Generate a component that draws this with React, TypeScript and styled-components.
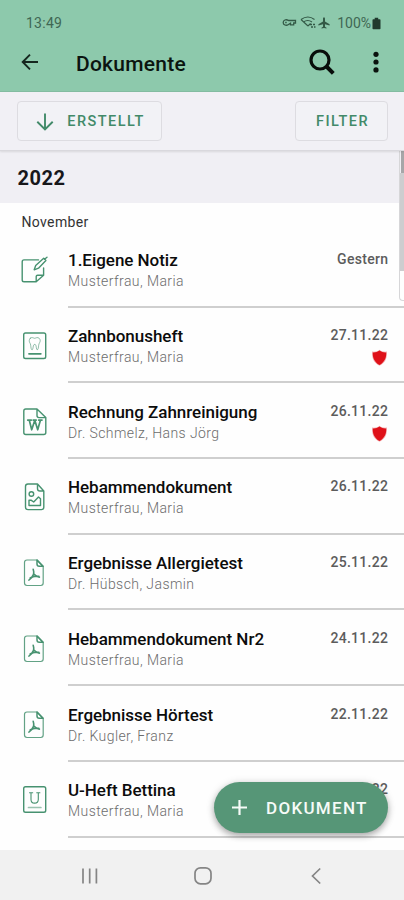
import React from "react";
import styled, { createGlobalStyle } from "styled-components";

const GlobalStyle = createGlobalStyle`
  * { box-sizing: border-box; }
  body { margin: 0; background: #fff; font-family: Roboto, "Liberation Sans", sans-serif; }
`;

const Screen = styled.div`
  position: relative;
  display: flex;
  flex-direction: column;
  width: 404px;
  height: 900px;
  overflow: hidden;
  background: #fefefe;
`;

const Header = styled.header`
  flex: none;
  height: 92px;
  background: #8dc9ac;
  border-bottom: 1px solid #84bda2;
`;

const StatusBar = styled.div`
  display: flex;
  align-items: center;
  justify-content: space-between;
  height: 32px;
  padding: 14px 23px 0 26px;
  color: #3f6753;
  font-size: 14px;
  line-height: 18px;
`;

const StatusTime = styled.span`
  letter-spacing: 0.25px;
`;

const StatusIcons = styled.div`
  display: flex;
  align-items: center;
  svg { display: block; }
`;

const Battery = styled.span`
  margin: 0 1px 0 4px;
  letter-spacing: 0;
`;

const AppBar = styled.div`
  display: flex;
  align-items: center;
  height: 60px;
  padding: 0 20px 0 20px;
  color: #0b1410;
  svg { display: block; }
`;

const AppTitle = styled.h1`
  flex: 1;
  margin: 3px 0 0 36px;
  font-size: 21px;
  line-height: 28px;
  font-weight: 500;
  letter-spacing: 0.25px;
`;

const AppActions = styled.div`
  display: flex;
  align-items: center;
  gap: 32px;
`;

const Toolbar = styled.div`
  position: relative;
  z-index: 1;
  flex: none;
  display: flex;
  justify-content: space-between;
  height: 59px;
  padding: 9px 16px 0 17px;
  background: #f1f0f5;
  border-bottom: 1px solid #d9d8dd;
  box-shadow: 0 1px 2px rgba(0, 0, 0, 0.1);
`;

const OutlineButton = styled.button<{ $width: number }>`
  display: flex;
  align-items: center;
  justify-content: center;
  gap: 13px;
  width: ${(p) => p.$width}px;
  height: 40px;
  padding: 1px 0 0 2px;
  border: 1px solid #dddce1;
  border-radius: 4px;
  background: #f2f2f6;
  color: #428a69;
  font: 500 14.5px/20px Roboto, sans-serif;
  letter-spacing: 1.45px;
`;

const YearHeading = styled.h2`
  flex: none;
  height: 52px;
  margin: 0;
  padding: 13px 17.5px 0;
  background: #f0eff4;
  color: #17171a;
  font-size: 20px;
  line-height: 28px;
  font-weight: 700;
  letter-spacing: 0.5px;
`;

const MonthHeading = styled.h3`
  flex: none;
  height: 29px;
  margin: 0;
  padding: 10px 21.5px 0;
  color: #333;
  font-size: 14px;
  line-height: 19px;
  font-weight: 400;
  letter-spacing: 0.35px;
`;

const List = styled.ul`
  flex: 1;
  min-height: 0;
  margin: 0;
  padding: 0;
  overflow: hidden;
  list-style: none;
`;

const Row = styled.li`
  display: flex;
  height: 75.7px;
`;

const RowIcon = styled.div`
  flex: none;
  width: 68px;
  padding: 23.4px 0 0 20px;
  svg { display: block; }
`;

const RowBody = styled.div`
  flex: 1;
  display: flex;
  justify-content: space-between;
  padding: 17.4px 16px 0 0;
  border-bottom: 2px solid #cfcfcf;
`;

const RowTitle = styled.div`
  color: #0c0c0c;
  font-size: 17px;
  line-height: 22px;
  font-weight: 500;
  letter-spacing: -0.03px;
`;

const RowOwner = styled.div`
  color: #6c6c6c;
  font-size: 14px;
  line-height: 21px;
  font-weight: 300;
  letter-spacing: 0.42px;
`;

const RowMeta = styled.div`
  display: flex;
  flex-direction: column;
  align-items: flex-end;
  gap: 4px;
  margin-right: -0.3px;
  color: #5c5c5c;
  font-size: 14px;
  line-height: 20px;
  font-weight: 500;
  letter-spacing: 0.3px;
  svg { display: block; }
`;

const FloatingButton = styled.button`
  position: absolute;
  left: 214px;
  top: 782px;
  display: flex;
  align-items: center;
  gap: 18px;
  width: 174px;
  height: 51px;
  padding: 0 0 0 17px;
  border: 0;
  border-radius: 26px;
  background: #569677;
  color: #f6fbf8;
  font: 500 17px/22px Roboto, sans-serif;
  letter-spacing: 1.3px;
  box-shadow: 0 3px 6px rgba(0, 0, 0, 0.28), 0 1px 10px rgba(0, 0, 0, 0.12);
`;

const ScrollRail = styled.div`
  position: absolute;
  right: 0;
  top: 151px;
  width: 5px;
  height: 150px;
  padding: 22px 0 0 0;
  border-left: 1px solid #d6d6d8;
  border-bottom: 1px solid #d6d6d8;
  border-bottom-left-radius: 4px;
  background: linear-gradient(to right, transparent 1px, #a6a6a8 1px) 0 0 / 100% 22px no-repeat;
`;

const ScrollThumb = styled.div`
  height: 98px;
  background: #cdcdcf;
`;

const NavBar = styled.nav`
  flex: none;
  display: flex;
  align-items: center;
  height: 50px;
  padding: 1px 80px 0;
  justify-content: space-between;
  background: #f1f1f1;
  svg { display: block; }
`;

type Kind = "note" | "tooth" | "word" | "image" | "pdf" | "uheft";

const Glyphs: Record<Kind, React.ReactNode> = {
  note: (
    <>
      <path d="M18.5 4.9H4q-1.8 0-1.8 1.8V25q0 1.8 1.8 1.8h12.2l7.4-6.5V13M16.2 26.6v-5q0-1.4 1.4-1.4h5.8" />
      <path d="m14.2 14.8 1.5-4.2 8-7.4 2.2 2.2-7.4 7.8ZM24.5 4.3l2.5-2" />
    </>
  ),
  tooth: (
    <>
      <rect x="3.7" y="2" width="22" height="25.5" rx="1.8" />
      <path d="M10.3 7.2c1.8-1.5 3-.1 4.3.1 1.4-.2 3-1.5 4.6 0 2 2.1.5 4.2-.2 5.6-.6 1.5-.3 4.6-1.4 5.7-1 .7-1-1-1.3-2.2-.3-2-.6-3-1.600-3s-1.300 1-1.600 3c-.3 1.200-.4 2.900-1.400 2.200-1-1.100-.8-4.200-1.300-5.700-.8-1.400-2.200-3.600-.1-5.700Z" strokeWidth=".8" opacity=".75" />
      <path d="M9 22.800h11.800" strokeWidth="1.800" />
    </>
  ),
  word: (
    <>
      <path d="M17 2H5.800Q3.800 2 3.800 4v21.500q0 2 2 2h18q2 0 2-2V10.600ZM17 2v6.600q0 2 2 2h6.800" />
      <path d="M7.700 13.100h3.600M13.200 13.100h3M18.700 13.100h3.300M9.300 13.300l2.400 9.500 3.100-9.500 2.900 9.500 2.700-9.500" strokeWidth="1.700" />
    </>
  ),
  image: (
    <>
      <path d="M17.500 2H8Q5.500 2 5.500 4.500v20.700q0 2.400 2.500 2.400h13.400q2.400 0 2.400-2.400V9ZM17.500 2v4.400Q17.500 9 20 9h3.800" />
      <circle cx="11.400" cy="12" r="2.300" />
      <path d="M9 18.200v5.300h11.500v-6.800l-2-1.800-4.800 5.100-2.700-1.800Z" strokeWidth="1.400" />
    </>
  ),
  pdf: (
    <>
      <path d="M17 2H7Q4.500 2 4.500 4.500v20.600q0 2.400 2.500 2.400h13.800q2.400 0 2.400-2.400V8.500Z" strokeWidth="1.200" opacity=".85" />
      <path d="M17 2v4q0 2.300 2.300 2.300h3.800Z" strokeWidth="1.500" />
      <path d="M13.200 11.200c.7 2.200.7 4 .3 5.200-.9 2.300-2.300 4.400-4.600 5.700M13.600 15.800c1.400 1.600 3 3 5.800 3.300M10.200 20c2.600-1.700 5.400-2.200 8.600-1.600" strokeWidth="1.600" />
    </>
  ),
  uheft: (
    <>
      <rect x="3.700" y="1.800" width="22" height="25.500" rx="1.800" />
      <path d="M9.500 7.800h3.200M16.700 7.800h3.200M11 8v6.400q0 3.700 3.600 3.700t3.700-3.700V8" strokeWidth="1.100" />
      <path d="M8.500 22.500h12.400" strokeWidth="1.700" opacity=".55" />
    </>
  ),
};

const DocIcon = ({ kind }: { kind: Kind }) => (
  <svg width="30" height="30" viewBox="0 0 30 30" fill="none" stroke="#479270" strokeWidth="1.4" strokeLinejoin="round" strokeLinecap="round">
    {Glyphs[kind]}
  </svg>
);

const Shield = () => (
  <svg width="17" height="18" viewBox="0 0 16 18">
    <path d="M8 .8c2 1.800 4.400 2 7.400 1.800.4 6-1 11.200-7.400 14.200C1.600 13.800.200 8.600.600 2.600 3.600 2.800 6 2.600 8 .8Z" fill="#f3b0b2" />
    <path d="M8 1.500c2 1.500 4.200 2.100 6.700 1.900.3 5-1.500 9.600-6.700 12.600C2.800 13 1 8.400 1.300 3.400 3.800 3.600 6 3 8 1.500Z" fill="#df1119" />
  </svg>
);

interface Doc {
  kind: Kind;
  title: string;
  owner: string;
  date: string;
  flagged?: boolean;
}

const docs: Doc[] = [
  { kind: "note", title: "1.Eigene Notiz", owner: "Musterfrau, Maria", date: "Gestern" },
  { kind: "tooth", title: "Zahnbonusheft", owner: "Musterfrau, Maria", date: "27.11.22", flagged: true },
  { kind: "word", title: "Rechnung Zahnreinigung", owner: "Dr. Schmelz, Hans Jörg", date: "26.11.22", flagged: true },
  { kind: "image", title: "Hebammendokument", owner: "Musterfrau, Maria", date: "26.11.22" },
  { kind: "pdf", title: "Ergebnisse Allergietest", owner: "Dr. Hübsch, Jasmin", date: "25.11.22" },
  { kind: "pdf", title: "Hebammendokument Nr2", owner: "Musterfrau, Maria", date: "24.11.22" },
  { kind: "pdf", title: "Ergebnisse Hörtest", owner: "Dr. Kugler, Franz", date: "22.11.22" },
  { kind: "uheft", title: "U-Heft Bettina", owner: "Musterfrau, Maria", date: "21.11.22" },
];

export default function App() {
  return (
    <>
      <GlobalStyle />
      <Screen>
        <Header>
          <StatusBar>
            <StatusTime>13:49</StatusTime>
            <StatusIcons>
              <svg width="52" height="16" viewBox="0 0 52 16" fill="none" stroke="#335946" strokeWidth="1.300">
                <path d="M7.500 5.500C5 3.800 2.200 5.200 2.200 7.500s2.800 3.700 5.300 2l2-1.300v1.600h3.200V8h1.800V5.500H7.500ZM4.200 7.500h1.500" />
                <path d="M20 4.500q7-5 13.500 0M22.500 7q4.200-3 8.500 0M27 11l-7-6.500M27 11l2.500-2.500" strokeWidth="1.100" />
                <path d="M29 9.500h5M30 12h4.500" strokeWidth="1.500" strokeDasharray="2 1" />
                <path d="M43 2.200c.7 0 1 .8 1 1.600v2.700l4.600 2.800v1.200L44 9.300v2.400l1.500 1v.8L43 13l-2.500.5v-.8l1.500-1V9.300l-4.600 1.200V9.300L42 6.500V3.800c0-.8.3-1.600 1-1.600Z" fill="#335946" stroke="none" />
              </svg>
              <Battery>100%</Battery>
              <svg width="9" height="13" viewBox="0 0 9 13">
                <path d="M2.700.8h3.500v1.400h1.500q.8 0 .8.800v8.400q0 .8-.8.800H1.300q-.8 0-.8-.8V3q0-.8.8-.8h1.400Z" fill="#21392d" />
              </svg>
            </StatusIcons>
          </StatusBar>
          <AppBar>
            <svg width="20" height="20" viewBox="0 0 20 20" fill="none" stroke="#15261e" strokeWidth="1.900">
              <path d="M18 10H2.700M10 2.700 2.700 10l7.300 7.300" />
            </svg>
            <AppTitle>Dokumente</AppTitle>
            <AppActions>
              <svg width="28" height="28" viewBox="0 0 28 28" fill="none" stroke="#080d0a">
                <circle cx="12" cy="12" r="9" strokeWidth="3.200" />
                <path d="m18.500 18.500 6.800 6.800" strokeWidth="4" />
              </svg>
              <svg width="16" height="24" viewBox="0 0 16 24" fill="#0b120e">
                <circle cx="8" cy="4.300" r="2.600" />
                <circle cx="8" cy="12" r="2.600" />
                <circle cx="8" cy="19.900" r="2.600" />
              </svg>
            </AppActions>
          </AppBar>
        </Header>
        <Toolbar>
          <OutlineButton $width={145}>
            <svg width="18" height="18" viewBox="0 0 18 18" fill="none" stroke="#428a69" strokeWidth="1.900">
              <path d="M9 .5v15.500M1.300 8.800 9 16.400l7.700-7.600" />
            </svg>
            ERSTELLT
          </OutlineButton>
          <OutlineButton $width={93}>FILTER</OutlineButton>
        </Toolbar>
        <YearHeading>2022</YearHeading>
        <MonthHeading>November</MonthHeading>
        <List>
          {docs.map((d) => (
            <Row key={d.title}>
              <RowIcon>
                <DocIcon kind={d.kind} />
              </RowIcon>
              <RowBody>
                <div>
                  <RowTitle>{d.title}</RowTitle>
                  <RowOwner>{d.owner}</RowOwner>
                </div>
                <RowMeta>
                  {d.date}
                  {d.flagged && <Shield />}
                </RowMeta>
              </RowBody>
            </Row>
          ))}
        </List>
        <NavBar>
          <svg width="20" height="18" viewBox="0 0 20 18" stroke="#858585" strokeWidth="1.700">
            <path d="M3 1.500v15M9.700 1.500v15M16.400 1.500v15" />
          </svg>
          <svg width="20" height="20" viewBox="0 0 20 20" fill="none" stroke="#858585" strokeWidth="1.700">
            <rect x="1" y="1.800" width="16" height="16" rx="5.500" />
          </svg>
          <svg width="16" height="18" viewBox="0 0 16 18" fill="none" stroke="#858585" strokeWidth="1.700">
            <path d="M12.200 1.500 4.500 9l7.700 7.500" />
          </svg>
        </NavBar>
        <ScrollRail>
          <ScrollThumb />
        </ScrollRail>
        <FloatingButton>
          <svg width="17" height="17" viewBox="0 0 17 17" stroke="#f6fbf8" strokeWidth="2.200">
            <path d="M8.500 1v15M1 8.500h15" />
          </svg>
          DOKUMENT
        </FloatingButton>
      </Screen>
    </>
  );
}
